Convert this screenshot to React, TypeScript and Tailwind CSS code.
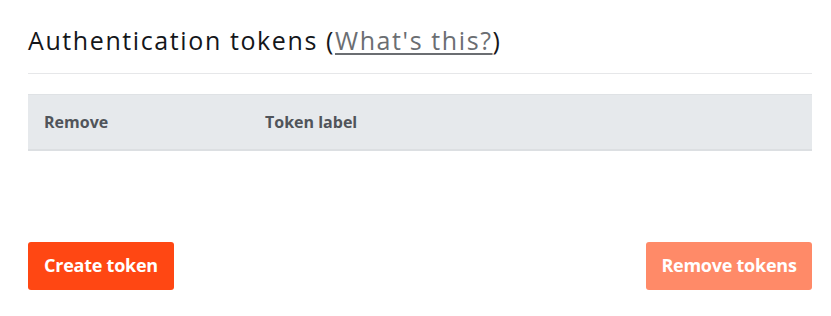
export default function App() {
  return (
    <div className="w-[831px] h-[316px] bg-white pl-[28px] pr-[19px] pt-[22px] [font-family:'Open_Sans',sans-serif]">
      <h2 className="text-[25px] leading-[36px] text-[#14161a] font-normal tracking-[1.6px]">
        Authentication tokens (
        <a href="#" className="text-[#6b6e72] underline decoration-[2px] underline-offset-[3px]">
          What's this?
        </a>
        )
      </h2>
      <div className="mt-[15px] border-t border-[#e6e7e9]" />
      <table className="mt-[20px] w-full text-left">
        <thead className="bg-[#e6e9ec] border-t border-[#dfe2e5] border-b-2 border-b-[#dcdfe2]">
          <tr className="h-[55px]">
            <th className="w-[237px] pl-[16px] text-[16px] font-bold text-[#50545a]">Remove</th>
            <th className="text-[16px] font-bold text-[#50545a]">Token label</th>
          </tr>
        </thead>
      </table>
      <div className="mt-[91px] flex justify-between">
        <button className="h-[48px] w-[146px] rounded-[3px] bg-[#ff4713] text-white text-[18px] font-bold tracking-[-0.25px]">
          Create token
        </button>
        <button className="h-[48px] w-[166px] rounded-[3px] bg-[#ff8a68] text-white text-[18px] font-bold tracking-[-0.25px]">
          Remove tokens
        </button>
      </div>
    </div>
  );
}
